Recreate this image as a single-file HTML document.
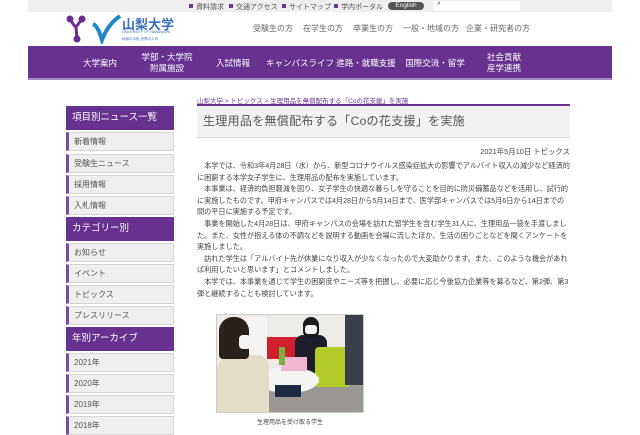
<!DOCTYPE html>
<html><head><meta charset="utf-8"><style>
*{margin:0;padding:0;box-sizing:border-box}
body{width:640px;height:426px;overflow:hidden;background:#fff;font-family:"Liberation Sans","Noto Sans CJK JP",sans-serif;position:relative;color:#444}
.a{position:absolute;white-space:nowrap}
.top{left:28px;top:0;width:584px;height:12px;background:#efefef}
.ul{font-size:7px;color:#555;top:2px}
.ul:before{content:"";display:inline-block;width:4px;height:4px;background:#6a3594;margin-right:3px;vertical-align:1px}
.hn{font-size:8px;color:#666;top:23px}
.band{left:28px;top:46px;width:584px;height:34px;background:#66318f;border-bottom:2px solid #a58bc0}
.mn{color:#fff;font-size:8.5px;text-align:center;line-height:11px;transform:translateX(-50%)}
.sh{left:66px;width:108px;height:24px;background:#66318f;color:#fff;font-size:9.5px;line-height:24px;padding-left:6px}
.si{left:66px;width:108px;height:19px;background:#efefef;border:1px solid #d4d4d4;border-left:3px solid #7a4ba3;font-size:8px;line-height:17px;padding-left:5px;color:#555}
.bt{left:197px;top:161px;font-size:7.15px;line-height:11.6px;color:#444}
</style></head><body>
<div class="a top"></div>
<div class="a ul" style="left:189px">資料請求</div>
<div class="a ul" style="left:229px">交通アクセス</div>
<div class="a ul" style="left:282px">サイトマップ</div>
<div class="a ul" style="left:334px">学内ポータル</div>
<div class="a" style="left:388px;top:2px;width:36px;height:8px;background:#555;border-radius:4px;color:#fff;font-size:6.5px;text-align:center;line-height:8px">English</div>
<div class="a" style="left:433px;top:1px;width:87px;height:10px;background:#fff"></div>
<div class="a" style="left:437px;top:0px;font-size:7px;color:#333">⌕</div>
<svg class="a" style="left:64px;top:14px" width="58" height="30" viewBox="0 0 58 30">
<circle cx="6" cy="5" r="3.5" fill="#6b2d8c"/><circle cx="18" cy="5" r="3.5" fill="#6b2d8c"/><circle cx="13" cy="25" r="3.5" fill="#6b2d8c"/>
<path d="M6 5 Q10 12 12 13 L18 5 M12 13 L13 25" stroke="#6b2d8c" stroke-width="3" fill="none"/>
<path d="M29 10 Q34 12 38 26 Q44 10 56 2" stroke="#1e86c8" stroke-width="4" fill="none"/>
</svg>
<div class="a" style="left:122px;top:14px;font-size:13px;color:#3c6fb8;font-weight:bold">山梨大学</div>
<div class="a" style="left:122px;top:30px;font-size:3.5px;color:#3c6fb8">UNIVERSITY OF YAMANASHI</div>
<div class="a" style="left:122px;top:37px;font-size:3.5px;color:#3c6fb8">地域の中核 世界の人材</div>
<div class="a hn" style="left:253px">受験生の方</div>
<div class="a hn" style="left:303px">在学生の方</div>
<div class="a hn" style="left:353px">卒業生の方</div>
<div class="a hn" style="left:403px">一般・地域の方</div>
<div class="a hn" style="left:466px">企業・研究者の方</div>
<div class="a band"></div>
<div class="a mn" style="left:100px;top:58px">大学案内</div>
<div class="a mn" style="left:167px;top:52px">学部・大学院<br>附属施設</div>
<div class="a mn" style="left:233px;top:58px">入試情報</div>
<div class="a mn" style="left:300px;top:58px">キャンパスライフ</div>
<div class="a mn" style="left:366px;top:58px">進路・就職支援</div>
<div class="a mn" style="left:435px;top:58px">国際交流・留学</div>
<div class="a mn" style="left:504px;top:52px">社会貢献<br>産学連携</div>

<div class="a sh" style="top:106px">項目別ニュース一覧</div>
<div class="a si" style="top:132px">新着情報</div>
<div class="a si" style="top:154px">受験生ニュース</div>
<div class="a si" style="top:175px">採用情報</div>
<div class="a si" style="top:196px">入札情報</div>
<div class="a sh" style="top:217px">カテゴリー別</div>
<div class="a si" style="top:243px">お知らせ</div>
<div class="a si" style="top:264px">イベント</div>
<div class="a si" style="top:285px">トピックス</div>
<div class="a si" style="top:306px">プレスリリース</div>
<div class="a sh" style="top:327px">年別アーカイブ</div>
<div class="a si" style="top:353px">2021年</div>
<div class="a si" style="top:374px">2020年</div>
<div class="a si" style="top:395px">2019年</div>
<div class="a si" style="top:416px">2018年</div>

<div class="a" style="left:197px;top:95px;font-size:6.5px;color:#6a3594">山梨大学 &gt; トピックス &gt; 生理用品を無償配布する「Coの花支援」を実施</div>
<div class="a" style="left:197px;top:104px;width:373px;height:34px;background:#f2f2f2;border-top:2px solid #66318f;border-bottom:1px solid #ddd"></div>
<div class="a" style="left:203px;top:112px;font-size:12px;color:#555;letter-spacing:0.3px">生理用品を無償配布する「Coの花支援」を実施</div>
<div class="a" style="left:470px;top:146px;width:100px;text-align:right;font-size:7.4px;color:#444">2021年5月10日 トピックス</div>
<div class="a bt">　本学では、令和3年4月28日（水）から、新型コロナウイルス感染症拡大の影響でアルバイト収入の減少など経済的<br>に困窮する本学女子学生に、生理用品の配布を実施しています。<br>　本事業は、経済的負担軽減を図り、女子学生の快適な暮らしを守ることを目的に防災備蓄品などを活用し、試行的<br>に実施したものです。甲府キャンパスでは4月28日から5月14日まで、医学部キャンパスでは5月6日から14日までの<br>間の平日に実施する予定です。<br>　事業を開始した4月28日は、甲府キャンパスの会場を訪れた留学生を含む学生31人に、生理用品一袋を手渡しまし<br>た。また、女性が抱える体の不調などを説明する動画を会場に流したほか、生活の困りごとなどを聞くアンケートを<br>実施しました。<br>　訪れた学生は「アルバイト先が休業になり収入が少なくなったので大変助かります。また、このような機会があれ<br>ば利用したいと思います」とコメントしました。<br>　本学では、本事業を通じて学生の困窮度やニーズ等を把握し、必要に応じ今後協力企業等を募るなど、第2弾、第3<br>弾と継続することも検討しています。</div>

<div class="a" style="left:216px;top:314px;width:148px;height:99px;background:#d8d4cf;overflow:hidden;border:1px solid #ccc">
<div class="a" style="left:0;top:0;width:148px;height:60px;background:#eeece8"></div>
<div class="a" style="left:0;top:60px;width:148px;height:40px;background:#9a9794"></div>
<div class="a" style="left:50px;top:22px;width:40px;height:22px;background:#d02030"></div>
<div class="a" style="left:30px;top:2px;width:20px;height:45px;background:#f6f4f2"></div>
<div class="a" style="left:78px;top:20px;width:32px;height:50px;background:#1c1c2a;border-radius:8px 8px 2px 2px"></div>
<div class="a" style="left:86px;top:2px;width:16px;height:22px;background:#1a1a1a;border-radius:8px"></div>
<div class="a" style="left:88px;top:10px;width:12px;height:9px;background:#f4f4f4;border-radius:3px"></div>
<div class="a" style="left:98px;top:32px;width:36px;height:40px;background:#b4cc2a;border-radius:4px"></div>
<div class="a" style="left:128px;top:0;width:20px;height:70px;background:#3a3f4a"></div>
<div class="a" style="left:40px;top:52px;width:62px;height:26px;background:#f4f4f2;border-radius:50%"></div>
<div class="a" style="left:64px;top:42px;width:26px;height:14px;background:#f2b6d0"></div>
<div class="a" style="left:62px;top:32px;width:6px;height:18px;background:#7ab040"></div>
<div class="a" style="left:0;top:40px;width:52px;height:60px;background:#e4dcc4;border-radius:16px 12px 0 0"></div>
<div class="a" style="left:2px;top:2px;width:30px;height:42px;background:#2a211d;border-radius:14px 14px 4px 4px"></div>
<div class="a" style="left:22px;top:20px;width:12px;height:14px;background:#f4f4f4;border-radius:4px"></div>
<div class="a" style="left:58px;top:70px;width:26px;height:12px;background:#1e2a44"></div>
</div>
<div class="a" style="left:257px;top:417px;font-size:6px;color:#444">生理用品を受け取る学生</div>
</body></html>
